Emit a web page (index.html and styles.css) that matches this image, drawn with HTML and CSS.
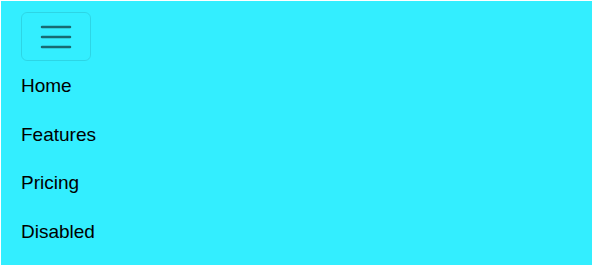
FILE: index.html
```html
<!DOCTYPE html>
<html>
<head>
<meta charset="utf-8">
<link rel="stylesheet" href="styles.css">
</head>
<body>
<nav class="navbar">
  <button class="toggler" type="button" aria-label="Toggle navigation">
    <svg class="toggler-icon" width="32" height="24" viewBox="0 0 32 24">
      <path d="M2 2h28M2 12h28M2 22h28" stroke="rgba(0,0,0,0.55)" stroke-width="2.5" stroke-linecap="round" fill="none"/>
    </svg>
  </button>
  <ul class="nav">
    <li class="nav-item"><a class="nav-link" href="#">Home</a></li>
    <li class="nav-item"><a class="nav-link" href="#">Features</a></li>
    <li class="nav-item"><a class="nav-link" href="#">Pricing</a></li>
    <li class="nav-item"><a class="nav-link disabled" href="#">Disabled</a></li>
  </ul>
</nav>
</body>
</html>
```
FILE: styles.css
```css
html, body {
  margin: 0;
  padding: 0;
  background: #ffffff;
}
body {
  padding: 1px 2px 2px 1px;
  font-family: "Liberation Sans", Arial, sans-serif;
}
.navbar {
  background: #33eeff;
  height: 264px;
  box-sizing: border-box;
  padding: 11px 20px 0 20px;
  display: flex;
  flex-direction: column;
  align-items: flex-start;
}
.toggler {
  width: 70px;
  height: 49px;
  box-sizing: border-box;
  border: 1px solid rgba(0, 0, 0, 0.1);
  border-radius: 6px;
  background: transparent;
  padding: 0;
  display: flex;
  align-items: center;
  justify-content: center;
}
.toggler-icon {
  display: block;
}
.nav {
  list-style: none;
  margin: 1px 0 0 0;
  padding: 0;
}
.nav-link {
  display: block;
  color: #000000;
  text-decoration: none;
  font-size: 19px;
  line-height: 28.7px;
  padding: 10px 0;
}
```
